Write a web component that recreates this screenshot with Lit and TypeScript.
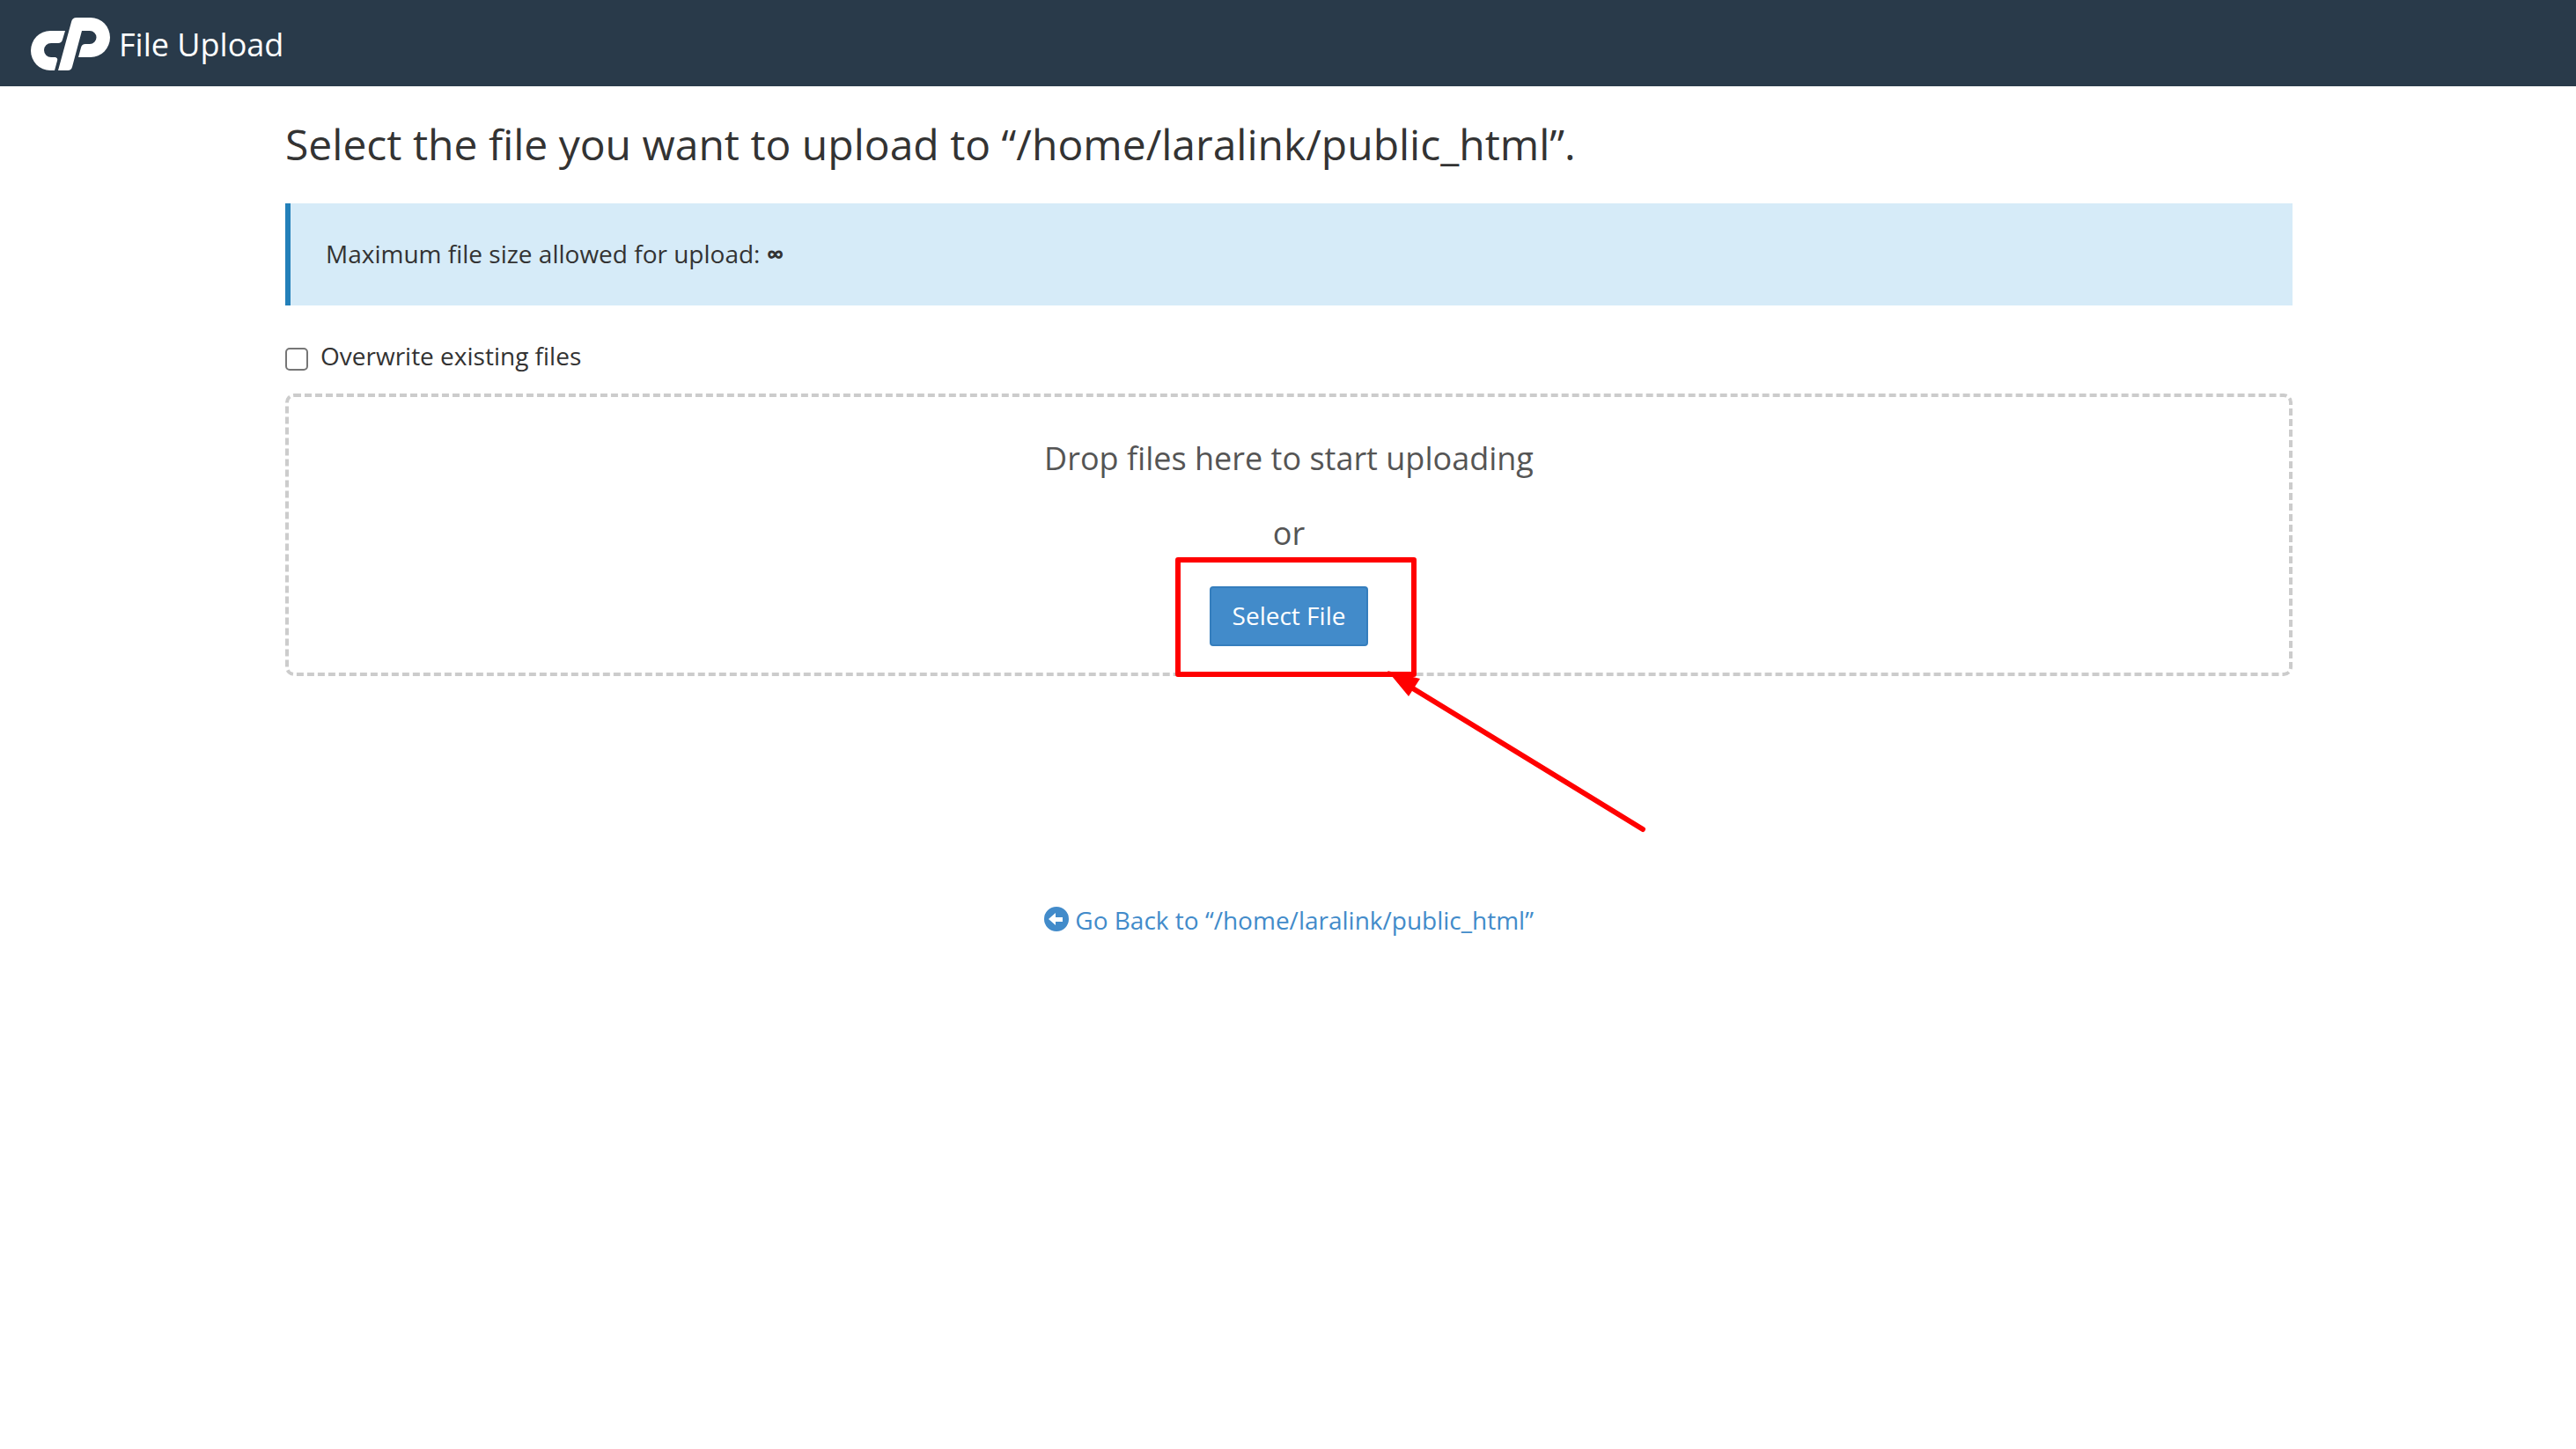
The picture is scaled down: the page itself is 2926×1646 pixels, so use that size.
import { LitElement, html, css } from "lit";
import { customElement, state } from "lit/decorators.js";

@customElement("app-root")
export class AppRoot extends LitElement {
  static styles = css`
    :host {
      display: block;
      min-height: 100vh;
      background: #fff;
      color: #333;
      font: 28px/40px "Open Sans", sans-serif;
    }
    * { box-sizing: border-box; }
    .header {
      display: flex;
      align-items: center;
      gap: 10px;
      height: 98px;
      padding: 2px 35px 0;
      background: #293a4a;
      color: #fff;
    }
    .logo { width: 90px; height: 60px; fill: currentColor; }
    .app-name { padding-top: 2px; font-size: 36px; line-height: 50px; }
    .container {
      max-width: 2340px;
      margin: 0 auto;
      padding: 0 29px 0 31px;
    }
    .title {
      margin: 0;
      padding: 32px 0 34px;
      font-size: 48px;
      line-height: 67px;
      font-weight: 400;
    }
    .notice {
      padding: 37px 40px 39px;
      border-left: 6px solid #2380b9;
      background: #d6ebf8;
    }
    .overwrite {
      display: flex;
      align-items: flex-start;
      gap: 14px;
      padding: 37px 0 23px;
    }
    .check {
      appearance: none;
      width: 26px;
      height: 26px;
      margin: 11px 0 0;
      border: 2px solid #767676;
      border-radius: 5px;
      background: #fff;
    }
    .check:checked { background: #428bca; }
    .drop {
      display: flex;
      flex-direction: column;
      align-items: center;
      padding: 45px 0 30px;
      border: 4px dashed #ccc;
      border-radius: 10px;
      color: #555;
    }
    .hint { margin: 0 0 35px; font-size: 36px; line-height: 50px; }
    .target { position: relative; }
    .select {
      display: block;
      padding: 11px 24px 13px;
      border: 2px solid #357ebd;
      border-radius: 4px;
      background: #428bca;
      color: #fff;
      font: inherit;
      cursor: pointer;
    }
    .marker {
      position: absolute;
      left: -39px;
      top: -33px;
      width: 540px;
      height: 316px;
      pointer-events: none;
    }
    .footer { padding: 257px 0 60px; text-align: center; }
    .back { color: #428bca; text-decoration: none; }
    .back-icon { width: 28px; height: 28px; vertical-align: -2px; fill: currentColor; }
  `;

  @state() private overwrite = false;

  render() {
    return html`
      <header class="header">
        <svg class="logo" viewBox="0 0 90 60" aria-hidden="true">
          <path d="M22 15H39L36 25Q35 29 31 29H23A8 8 0 0 0 23 45H28Q31 46 30 49L27 60H22A22 22.500 0 0 1 22 15Z" />
          <path d="M31 60L46 5Q47 0 52 0H68A22 22.500 0 0 1 68 45H54L57 34Q58 30 62 30H67A7.500 7.500 0 0 0 67 15H58L47 56Q46 60 42 60Z" />
        </svg>
        <span class="app-name">File Upload</span>
      </header>
      <main class="container">
        <h1 class="title">Select the file you want to upload to “/home/laralink/public_html”.</h1>
        <div class="notice">Maximum file size allowed for upload: <strong>∞</strong></div>
        <div class="overwrite">
          <input class="check" id="overwrite" type="checkbox" .checked=${this.overwrite}
            @change=${(e: Event) => (this.overwrite = (e.target as HTMLInputElement).checked)} />
          <label for="overwrite">Overwrite existing files</label>
        </div>
        <section class="drop">
          <p class="hint">Drop files here to start uploading</p>
          <p class="hint">or</p>
          <div class="target">
            <button class="select" type="button">Select File</button>
            <svg class="marker" viewBox="0 0 540 316" aria-hidden="true">
              <rect x="3" y="3" width="268" height="130" fill="none" stroke="#f00" stroke-width="6" stroke-linejoin="round" />
              <path d="M260 143L531 309" stroke="#f00" stroke-width="6" stroke-linecap="round" />
              <path d="M241 129L278 138L265 158Z" fill="#f00" />
            </svg>
          </div>
        </section>
        <footer class="footer">
          <a class="back" href="#"><svg class="back-icon" viewBox="0 0 28 28" aria-hidden="true">
            <path fill-rule="evenodd" d="M14 0A14 14 0 1 1 14 28A14 14 0 1 1 14 0ZM5 14L13 7V12H21V17H13V21Z" />
          </svg> Go Back to “/home/laralink/public_html”</a>
        </footer>
      </main>
    `;
  }
}
